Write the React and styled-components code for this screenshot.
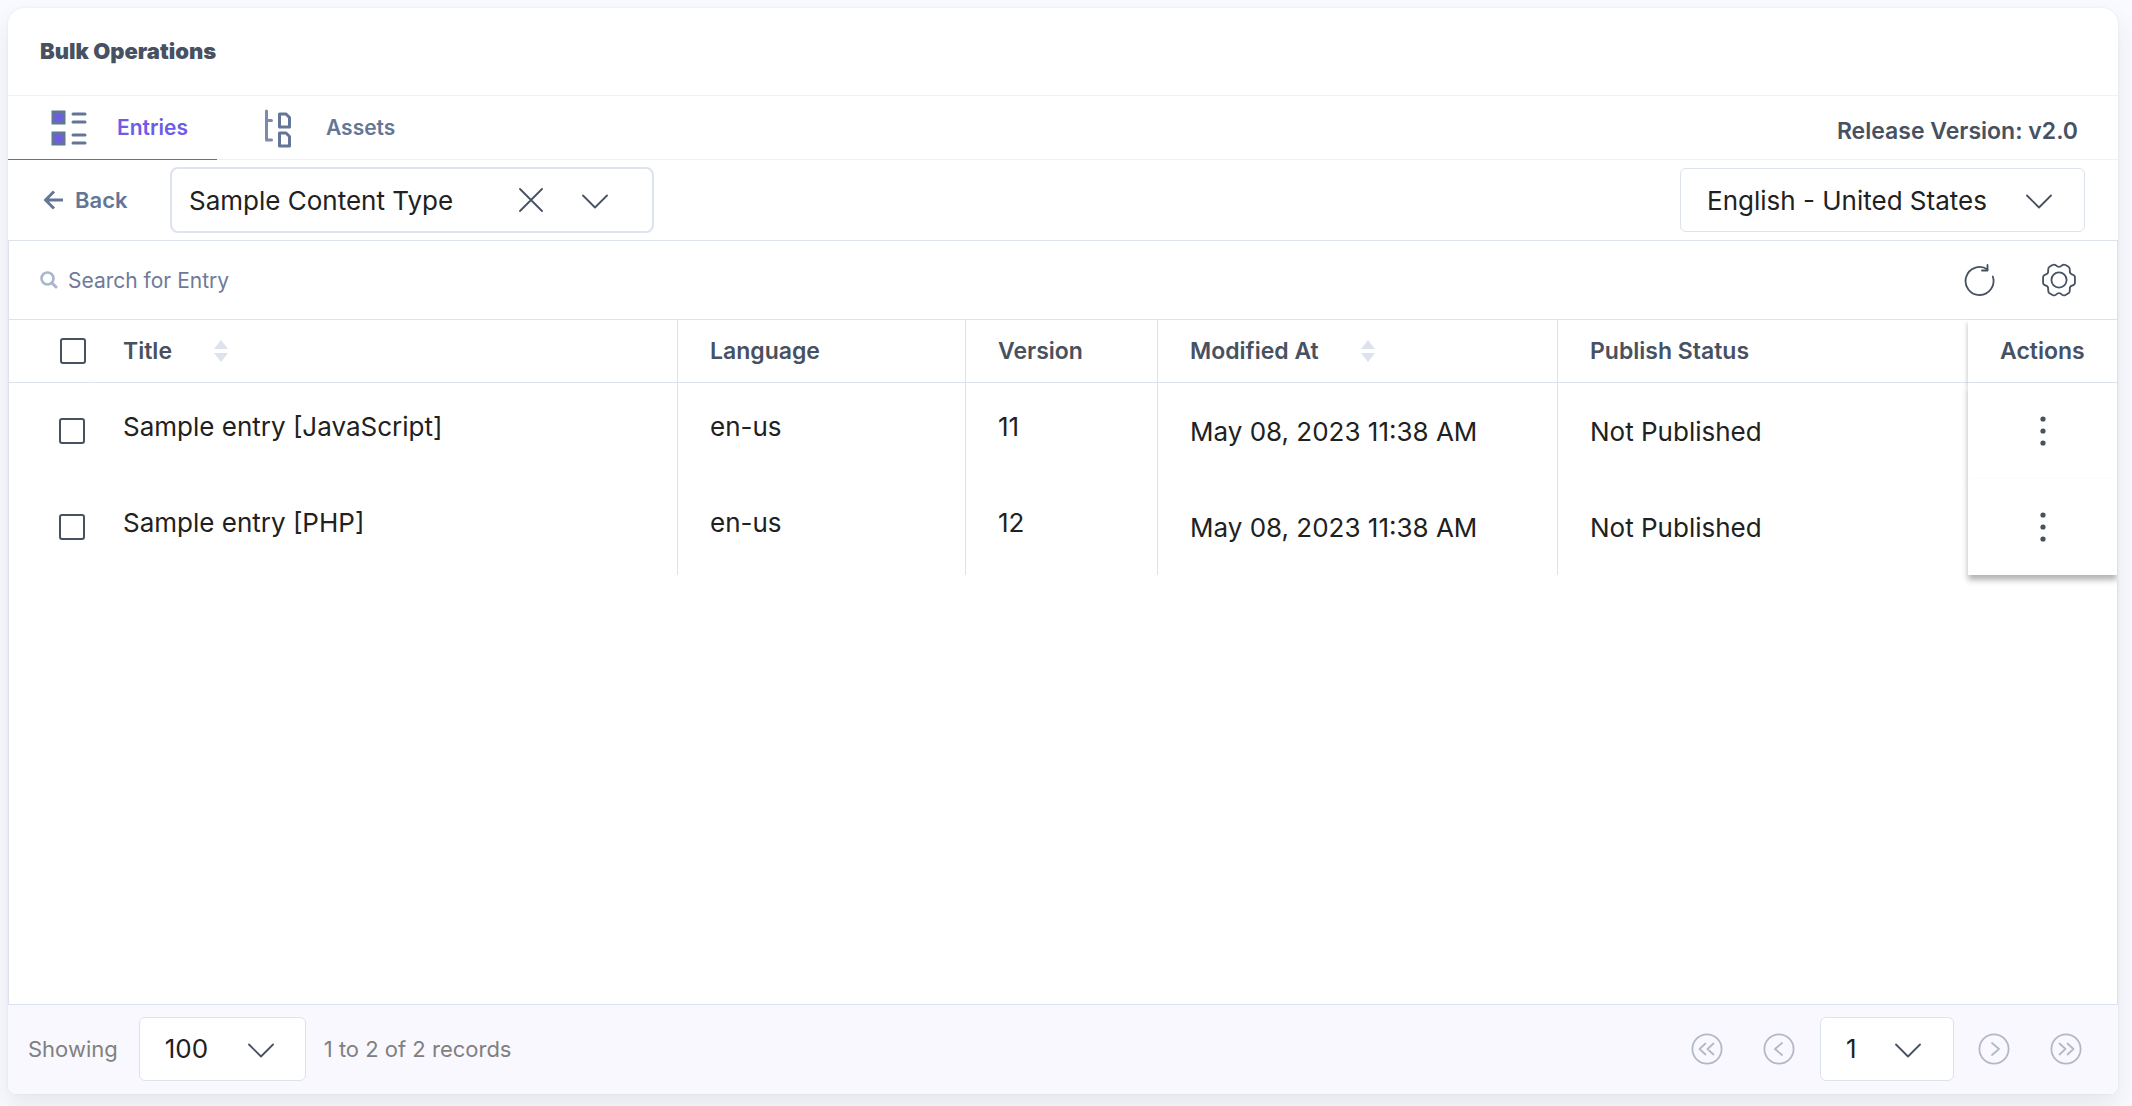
import { useState } from "react";
import styled, { createGlobalStyle, css } from "styled-components";

const entries = [
    { id: 1, title: "Sample entry [JavaScript]", language: "en-us", version: 11, modified: "May 08, 2023 11:38 AM", status: "Not Published" },
    { id: 2, title: "Sample entry [PHP]", language: "en-us", version: 12, modified: "May 08, 2023 11:38 AM", status: "Not Published" },
];

const EntriesIcon = () => (
    <svg width="48" height="40" viewBox="0 0 48 40" fill="none" aria-hidden="true">
        <path d="M8 4h11v11H8zM8 25h11v11H8z" fill="#6c5ce7" stroke="#647696" strokeWidth="3" />
        <path d="M28 6h12M28 14h12M28 27h12M28 35h12" stroke="#647696" strokeWidth="3" strokeLinecap="round" />
    </svg>
);

const AssetsIcon = () => (
    <svg width="48" height="40" viewBox="0 0 48 40" fill="none" aria-hidden="true">
        <path d="M12.5 3v29h5M12.5 12.500h5" stroke="#7c8bab" strokeWidth="3" strokeLinecap="round" strokeLinejoin="round" />
        <path d="M25.5 6h6.500l3.500 3.500v9.500h-10zM25.500 25h6.500l3.500 3.500v9.500h-10z" stroke="#647696" strokeWidth="3" strokeLinejoin="round" />
    </svg>
);

const BackIcon = () => (
    <svg width="20" height="20" viewBox="0 0 20 20" fill="none" aria-hidden="true">
        <path d="M19 10H2M10 1.500L1.500 10l8.500 8.500" stroke="#647696" strokeWidth="3" />
    </svg>
);

const ChevronIcon = () => (
    <svg width="26" height="18" viewBox="0 0 26 18" fill="none" aria-hidden="true">
        <path d="M1 4.500l12 12 12-12" stroke="#475161" strokeWidth="1.800" strokeLinecap="round" strokeLinejoin="round" />
    </svg>
);

const CloseIcon = () => (
    <svg width="24" height="24" viewBox="0 0 24 24" fill="none" aria-hidden="true">
        <path d="M1 1l22 22M23 1L1 23" stroke="#475161" strokeWidth="1.800" strokeLinecap="round" />
    </svg>
);

const SearchIcon = () => (
    <svg width="18" height="18" viewBox="0 0 18 18" fill="none" aria-hidden="true">
        <circle cx="7.500" cy="7.500" r="6" stroke="#a9b6cb" strokeWidth="2.600" />
        <path d="M12 12l4 4" stroke="#a9b6cb" strokeWidth="3" strokeLinecap="round" />
    </svg>
);

const RefreshIcon = () => (
    <svg width="32" height="32" viewBox="0 0 32 32" fill="none" aria-hidden="true">
        <path d="M29.800 12.500A14 14 0 1 1 24.500 5.500" stroke="#475161" strokeWidth="1.800" strokeLinecap="round" />
        <path d="M24.500 0.900v5.600h-5.500" stroke="#475161" strokeWidth="1.800" strokeLinecap="round" strokeLinejoin="round" />
    </svg>
);

const SettingsIcon = () => (
    <svg width="34" height="34" viewBox="0 0 34 34" fill="none" stroke="#475161" strokeWidth="1.800" strokeLinejoin="round" aria-hidden="true">
        <circle cx="17" cy="17" r="7.600" />
        <path d="M17 3.900Q15.500 3.900 14 2.400Q12.500 1 10.500 2L7.500 3.800Q6.200 4.600 6.200 6.500V8.200Q6.200 10.600 4 11.300Q1.100 12.200 1.100 14V20Q1.100 21.800 4 22.700Q6.200 23.400 6.200 25.800V27.500Q6.200 29.400 7.500 30.200L10.500 32Q12.500 33 14 31.600Q15.500 30.100 17 30.100Q18.500 30.100 20 31.600Q21.500 33 23.500 32L26.500 30.200Q27.800 29.400 27.800 27.500V25.800Q27.800 23.400 30 22.700Q32.900 21.800 32.900 20V14Q32.900 12.200 30 11.300Q27.800 10.600 27.800 8.200V6.500Q27.800 4.600 26.500 3.800L23.500 2Q21.500 1 20 2.400Q18.500 3.900 17 3.900Z" />
    </svg>
);

const SortIcon = () => (
    <svg width="14" height="22" viewBox="0 0 14 22" fill="#dde2ee" aria-hidden="true">
        <path d="M7 0l7 9H0zM7 22l7-9H0z" />
    </svg>
);

const DotsIcon = () => (
    <svg width="6" height="30" viewBox="0 0 6 30" fill="#475161" aria-hidden="true">
        <circle cx="3" cy="3" r="2.600" />
        <circle cx="3" cy="15" r="2.600" />
        <circle cx="3" cy="27" r="2.600" />
    </svg>
);

const PageIcon = ({ d }) => (
    <svg width="32" height="32" viewBox="0 0 32 32" fill="none" stroke="#b3b9c4" strokeWidth="1.800" strokeLinecap="round" strokeLinejoin="round" aria-hidden="true">
        <circle cx="16" cy="16" r="14.600" />
        <path d={d} />
    </svg>
);

const App = () => {
    const [checked, setChecked] = useState([]);
    const allChecked = checked.length === entries.length;

    const toggle = (id) =>
        setChecked(checked.includes(id) ? checked.filter((item) => item !== id) : [...checked, id]);

    return (
        <Page>
            <GlobalStyle />
            <Card>
                <Header>
                    <h1>Bulk Operations</h1>
                </Header>
                <TabBar>
                    <Tabs role="tablist">
                        <Tab role="tab" aria-selected="true" $active>
                            <EntriesIcon />
                            Entries
                        </Tab>
                        <Tab role="tab" aria-selected="false">
                            <AssetsIcon />
                            Assets
                        </Tab>
                    </Tabs>
                    <Release>Release Version: v2.0</Release>
                </TabBar>
                <Toolbar>
                    <BackButton>
                        <BackIcon />
                        Back
                    </BackButton>
                    <ContentTypeBox>
                        <Select aria-label="Content type">
                            <option>Sample Content Type</option>
                        </Select>
                        <IconButton aria-label="Clear content type">
                            <CloseIcon />
                        </IconButton>
                        <ChevronIcon />
                    </ContentTypeBox>
                    <LocaleBox>
                        <Select aria-label="Locale">
                            <option>English - United States</option>
                        </Select>
                        <ChevronIcon />
                    </LocaleBox>
                </Toolbar>
                <Panel>
                    <SearchRow>
                        <SearchLabel>
                            <SearchIcon />
                            <input type="search" placeholder="Search for Entry" aria-label="Search for Entry" />
                        </SearchLabel>
                        <IconButton aria-label="Refresh">
                            <RefreshIcon />
                        </IconButton>
                        <IconButton aria-label="Table settings">
                            <SettingsIcon />
                        </IconButton>
                    </SearchRow>
                    <Table>
                        <colgroup>
                            <Col $width={82} />
                            <Col $width={587} />
                            <Col $width={288} />
                            <Col $width={192} />
                            <Col $width={400} />
                            <col />
                            <Col $width={149} />
                        </colgroup>
                        <thead>
                            <tr>
                                <CheckHead>
                                    <Checkbox
                                        type="checkbox"
                                        aria-label="Select all entries"
                                        checked={allChecked}
                                        onChange={() => setChecked(allChecked ? [] : entries.map((entry) => entry.id))}
                                    />
                                </CheckHead>
                                <Th $line>
                                    <SortButton>
                                        Title
                                        <SortIcon />
                                    </SortButton>
                                </Th>
                                <Th $line>Language</Th>
                                <Th $line>Version</Th>
                                <Th $line>
                                    <SortButton>
                                        Modified At
                                        <SortIcon />
                                    </SortButton>
                                </Th>
                                <Th>Publish Status</Th>
                                <ActionHead>Actions</ActionHead>
                            </tr>
                        </thead>
                        <tbody>
                            {entries.map((entry) => (
                                <tr key={entry.id}>
                                    <CheckCell>
                                        <Checkbox
                                            type="checkbox"
                                            aria-label={`Select ${entry.title}`}
                                            checked={checked.includes(entry.id)}
                                            onChange={() => toggle(entry.id)}
                                        />
                                    </CheckCell>
                                    <TextCell $line>{entry.title}</TextCell>
                                    <TextCell $line>{entry.language}</TextCell>
                                    <TextCell $line>{entry.version}</TextCell>
                                    <Td $line>{entry.modified}</Td>
                                    <Td>{entry.status}</Td>
                                    <ActionCell>
                                        <IconButton aria-label={`Actions for ${entry.title}`}>
                                            <DotsIcon />
                                        </IconButton>
                                    </ActionCell>
                                </tr>
                            ))}
                        </tbody>
                    </Table>
                </Panel>
                <Footer>
                    <label htmlFor="page-size">Showing</label>
                    <SizeBox>
                        <Select id="page-size">
                            <option>100</option>
                        </Select>
                        <ChevronIcon />
                    </SizeBox>
                    <span>1 to 2 of 2 records</span>
                    <Pager aria-label="Pagination">
                        <IconButton aria-label="First page">
                            <PageIcon d="M14.500 10.500l-6 5.500 6 5.500M22.500 10.500l-6 5.500 6 5.500" />
                        </IconButton>
                        <IconButton aria-label="Previous page">
                            <PageIcon d="M19 10l-7 6 7 6" />
                        </IconButton>
                        <PageBox>
                            <Select aria-label="Page">
                                <option>1</option>
                            </Select>
                            <ChevronIcon />
                        </PageBox>
                        <IconButton aria-label="Next page">
                            <PageIcon d="M14 10l7 6-7 6" />
                        </IconButton>
                        <IconButton aria-label="Last page">
                            <PageIcon d="M9.500 10.500l6 5.500-6 5.500M17.500 10.500l6 5.500-6 5.500" />
                        </IconButton>
                    </Pager>
                </Footer>
            </Card>
        </Page>
    );
};

const GlobalStyle = createGlobalStyle`
    * {
        box-sizing: border-box;
    }
    body {
        margin: 0;
        background-color: #f9faff;
        color: #212121;
        font-family: Inter, "Liberation Sans", sans-serif;
    }
    button, input, select {
        font-family: inherit;
    }
    svg {
        display: block;
        flex-shrink: 0;
    }
`;

const Page = styled.main`
    display: flex;
    min-height: 100vh;
    padding: 8px 14px 12px 8px;
`;

const Card = styled.div`
    display: flex;
    flex-direction: column;
    flex: 1;
    min-width: 0;
    background-color: white;
    border-radius: 16px 16px 8px 8px;
    box-shadow: 0 12px 24px rgba(40, 45, 55, 0.09), 0 0 2px rgba(40, 45, 55, 0.1);
`;

const Header = styled.header`
    display: flex;
    align-items: center;
    height: 88px;
    padding: 0 32px 2px;
    border-bottom: 1px solid #edf0f4;
    h1 {
        margin: 0;
        font-size: 22px;
        font-weight: 900;
        color: #475161;
    }
`;

const TabBar = styled.div`
    display: flex;
    justify-content: space-between;
    height: 64px;
    padding-right: 40px;
    border-bottom: 1px solid #edf0f4;
`;

const Tabs = styled.div`
    display: flex;
    margin-bottom: -1px;
`;

const Tab = styled.button`
    display: flex;
    align-items: center;
    gap: 24px;
    padding: 0 29px 0 37px;
    background-color: transparent;
    border: none;
    border-bottom: 1px solid ${(props) => (props.$active ? "#6c5ce7" : "transparent")};
    color: ${(props) => (props.$active ? "#6c5ce7" : "#647696")};
    font-size: 21px;
    font-weight: 600;
    cursor: pointer;
`;

const Release = styled.p`
    margin: 0;
    padding-top: 7px;
    line-height: 56px;
    font-size: 23px;
    font-weight: 600;
    color: #475161;
`;

const Toolbar = styled.div`
    display: flex;
    align-items: center;
    height: 80px;
    padding: 0 33px 0 36px;
`;

const BackButton = styled.button`
    display: flex;
    align-items: center;
    gap: 11px;
    width: 126px;
    padding: 0;
    background-color: transparent;
    border: none;
    color: #647696;
    font-size: 22px;
    font-weight: 600;
    cursor: pointer;
`;

const Box = styled.div`
    display: flex;
    align-items: center;
    height: 64px;
    background-color: white;
    border: 1px solid #dde3ee;
    border-radius: 6px;
`;

const ContentTypeBox = styled(Box)`
    width: 484px;
    height: 66px;
    gap: 39px;
    padding: 0 44px 0 17px;
    border-width: 2px;
    border-radius: 8px;
`;

const LocaleBox = styled(Box)`
    width: 405px;
    margin-left: auto;
    padding: 0 32px 0 26px;
`;

const SizeBox = styled(Box)`
    width: 167px;
    margin: 0 18px 0 21px;
    padding: 0 31px 0 25px;
`;

const PageBox = styled(Box)`
    width: 134px;
    margin: 0 -16px 0 -15px;
    padding: 0 32px 0 25px;
`;

const Select = styled.select`
    appearance: none;
    flex: 1;
    min-width: 0;
    height: 100%;
    padding: 0;
    background-color: transparent;
    border: none;
    outline: none;
    color: #212121;
    font-size: 26px;
    cursor: pointer;
`;

const IconButton = styled.button`
    display: flex;
    align-items: center;
    justify-content: center;
    padding: 0;
    background-color: transparent;
    border: none;
    cursor: pointer;
`;

const Panel = styled.section`
    flex: 1;
    overflow: hidden;
    border: 1px solid #dde3ee;
`;

const SearchRow = styled.div`
    display: flex;
    align-items: center;
    gap: 47px;
    height: 79px;
    padding: 0 41px 0 31px;
    border-bottom: 1px solid #dde3ee;
`;

const SearchLabel = styled.label`
    display: flex;
    align-items: center;
    flex: 1;
    gap: 10px;
    input {
        flex: 1;
        padding: 0;
        background-color: transparent;
        border: none;
        outline: none;
        color: #475161;
        font-size: 21px;
        &::placeholder {
            color: #6e7a9a;
            opacity: 1;
        }
    }
`;

const Table = styled.table`
    width: 100%;
    table-layout: fixed;
    border-collapse: separate;
    border-spacing: 0;
`;

const Col = styled.col`
    width: ${(props) => props.$width}px;
`;

const line = css`
    border-right: 1px solid ${(props) => (props.$line ? "#dde0ea" : "transparent")};
`;

const Th = styled.th`
    height: 63px;
    padding: 0 0 0 32px;
    border-bottom: 1px solid #dde3ee;
    color: #475161;
    font-size: 23px;
    font-weight: 600;
    text-align: left;
    ${line}
`;

const CheckHead = styled(Th)`
    padding-left: 51px;
`;

const ActionHead = styled(Th)`
    position: relative;
    background-color: white;
    border-right: none;
    box-shadow: -1px 3px 4px rgba(0, 0, 0, 0.2);
`;

const SortButton = styled.button`
    display: flex;
    align-items: center;
    gap: 42px;
    padding: 0;
    background-color: transparent;
    border: none;
    color: inherit;
    font-size: 23px;
    font-weight: 600;
    cursor: pointer;
`;

const Td = styled.td`
    height: 96px;
    padding: 0 0 0 32px;
    font-size: 26px;
    white-space: nowrap;
    ${line}
`;

const TextCell = styled(Td)`
    padding-bottom: 10px;
`;

const CheckCell = styled(Td)`
    padding-left: 50px;
`;

const ActionCell = styled(Td)`
    position: relative;
    padding: 0;
    background-color: white;
    border-right: none;
    box-shadow: 0 5px 6px rgba(0, 0, 0, 0.3);
    button {
        margin: 0 auto;
    }
`;

const Checkbox = styled.input`
    appearance: none;
    display: block;
    width: 26px;
    height: 26px;
    margin: 0;
    border: 2px solid #475161;
    border-radius: 3px;
    cursor: pointer;
    &:checked {
        background-color: #6c5ce7;
        border-color: #6c5ce7;
    }
`;

const Footer = styled.footer`
    display: flex;
    align-items: center;
    height: 89px;
    padding: 0 36px 2px 20px;
    background-color: #f9f8ff;
    border-radius: 0 0 8px 8px;
    color: #808080;
    font-size: 22px;
`;

const Pager = styled.nav`
    display: flex;
    align-items: center;
    gap: 40px;
    margin-left: auto;
`;

export default App;
